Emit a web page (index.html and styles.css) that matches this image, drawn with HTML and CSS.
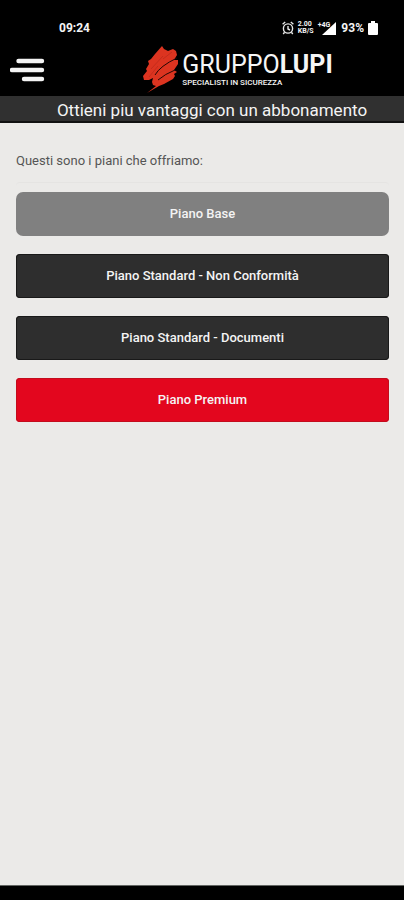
FILE: index.html
```html
<!DOCTYPE html>
<html lang="it">
<head>
<meta charset="utf-8">
<meta name="viewport" content="width=device-width, initial-scale=1">
<title>Gruppo Lupi</title>
<link rel="stylesheet" href="styles.css">
</head>
<body>
<div class="status">
  <time class="clock">09:24</time>
  <div class="indicators">
    <svg class="alarm" viewBox="0 0 12 14" aria-hidden="true"><g fill="none" stroke="#e8e8e8" stroke-width="1.4"><circle cx="6" cy="7.5" r="4.6"/><path d="M.6 3.2 3.2 1M11.4 3.2 8.8 1M6 5v3l2 1M2.6 11.2 1.2 13M9.4 11.2l1.4 1.8"/></g></svg>
    <span class="rate"><span>2.00</span><span>KB/S</span></span>
    <span class="signal"><span class="net">+4G</span><svg viewBox="0 0 14 13" aria-hidden="true"><path d="M14 0v13H0z" fill="#fff"/></svg></span>
    <span class="percent">93%</span>
    <svg class="battery" viewBox="0 0 10 14" aria-hidden="true"><path d="M3 0h4v2h2q1 0 1 1v10q0 1-1 1H1q-1 0-1-1V3q0-1 1-1h2z" fill="#fff"/></svg>
  </div>
</div>
<header class="header">
  <button class="menu" type="button" aria-label="Menu">
    <svg viewBox="0 0 36 24" aria-hidden="true"><path d="M8.500 3H32M2 12h30M14 21h18" stroke="#f4f4f4" stroke-width="4.400" stroke-linecap="round"/></svg>
  </button>
  <div class="brand">
    <svg class="mark" viewBox="0 0 36 48" aria-hidden="true">
      <path d="M19 0 12 8 8 13 5 15 6 18 3 23 4 25 0 30 1 34 6 34 10 32 9 36 10 39 13 40 4 47 16 40 21 38 30 33 32 30 31 28 34 26 31 24 33 21 35 18 35 14 31 14 34 9 33 5 30 3 25 5 21 3z" fill="#dc3420"/>
      <path d="M12 29Q17 20 34 12M15 34Q22 28 32 24" fill="none" stroke="#240705" stroke-width="1"/>
      <path d="M8 23 20 10M6 31 15 20M29 6 20 13" fill="none" stroke="#c42c1c" stroke-width="1"/>
    </svg>
    <div class="wordmark">
      <span class="name">GRUPPO<b>LUPI</b></span>
      <span class="tagline">SPECIALISTI IN SICUREZZA</span>
    </div>
  </div>
</header>
<h1 class="title">Ottieni piu vantaggi con un abbonamento</h1>
<main class="content">
  <p class="intro">Questi sono i piani che offriamo:</p>
  <div class="plans">
    <button class="plan base" type="button">Piano Base</button>
    <button class="plan" type="button">Piano Standard - Non Conformità</button>
    <button class="plan" type="button">Piano Standard - Documenti</button>
    <button class="plan premium" type="button">Piano Premium</button>
  </div>
</main>
<footer class="system"></footer>
</body>
</html>
```
FILE: styles.css
```css
* { box-sizing: border-box; }
body {
  margin: 0;
  min-height: 100vh;
  display: flex;
  flex-direction: column;
  background: #ebeae8;
  font-family: Roboto, "Noto Sans", sans-serif;
}
.status {
  height: 44px;
  padding: 12px 26px 0 59px;
  display: flex;
  align-items: center;
  justify-content: space-between;
  background: #000;
  color: #f4f4f4;
  font: bold 12px/16px Roboto, sans-serif;
}
.indicators { display: flex; align-items: center; gap: 4px; }
.alarm { width: 12px; height: 14px; }
.rate {
  display: flex;
  flex-direction: column;
  width: 16px;
  font-size: 7px;
  line-height: 7px;
}
.signal { display: flex; align-items: flex-start; height: 13px; }
.signal svg { width: 14px; height: 13px; margin-left: -8px; }
.net { font-size: 7px; line-height: 7px; }
.percent { margin-left: 1px; }
.battery { width: 10px; height: 14px; }
.header {
  height: 52px;
  padding: 0 10px;
  display: grid;
  grid-template-columns: 36px 1fr;
  align-items: start;
  background: #000;
}
.menu {
  margin-top: 14px;
  padding: 0;
  border: 0;
  background: none;
  width: 36px;
  height: 24px;
}
.menu svg { display: block; width: 36px; height: 24px; }
.brand {
  display: flex;
  gap: 3px;
  justify-content: center;
  padding: 2px 0 0 36px;
  color: #f6f6f6;
}
.mark { width: 36px; height: 48px; }
.wordmark { display: flex; flex-direction: column; padding-top: 5px; }
.name { font-size: 25px; line-height: 28px; }
.tagline { font-size: 8px; line-height: 8px; font-weight: 500; }
.title {
  margin: 0;
  height: 27px;
  padding-left: 20px;
  background: #303030;
  border-bottom: 2px solid #111;
  color: #f4f4f4;
  font-size: 17px;
  line-height: 28px;
  font-weight: 400;
  text-align: center;
  white-space: nowrap;
}
.content { flex: 1; padding: 28px 15px 0 16px; }
.intro { margin: 0; color: #555; font-size: 13px; line-height: 20px; }
.plans {
  margin-top: 11px;
  padding: 9px 0;
  display: flex;
  flex-direction: column;
  gap: 18px;
  border-top: 1px solid #e5e4e2;
  border-radius: 4px;
}
.plan {
  height: 44px;
  padding: 0;
  border: 0;
  border-radius: 4px;
  background: #2e2e2e;
  box-shadow: inset 0 0 0 1px #191919;
  color: #f4f4f4;
  font: 500 13px/20px Roboto, "Noto Sans", sans-serif;
}
.base { border-radius: 7px; background: #808080; box-shadow: none; }
.premium { background: #e3061e; box-shadow: inset 0 0 0 1px #c30c1c; }
.system { height: 15px; background: #000; border-top: 1px solid #626562; }
```
